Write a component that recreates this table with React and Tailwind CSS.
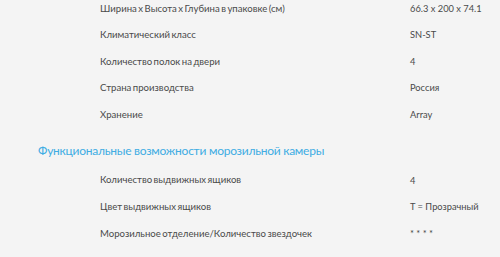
export default function App() {
  const rows1 = [
    ["Ширина x Высота x Глубина в упаковке (см)", "66.3 x 200 x 74.1"],
    ["Климатический класс", "SN-ST"],
    ["Количество полок на двери", "4"],
    ["Страна производства", "Россия"],
    ["Хранение", "Array"],
  ];
  const rows2 = [
    ["Количество выдвижных ящиков", "4"],
    ["Цвет выдвижных ящиков", "T = Прозрачный"],
    ["Морозильное отделение/Количество звездочек", "* * * *"],
  ];
  const Row = ({ l, v }) => (
    <div className="flex h-[26.6px] items-center whitespace-nowrap leading-none text-[#4a4a4a]">
      <div className="w-[410px] shrink-0 pl-[100px] text-[9.6px] [word-spacing:-1px]">{l}</div>
      <div className="text-[9.3px]">{v}</div>
    </div>
  );
  return (
    <div className="h-[257px] w-[500px] overflow-hidden bg-[#f4f4f4] font-['Lato',sans-serif]">
      <div className="-mt-[5px]">
        {rows1.map(([l, v]) => (
          <Row key={l} l={l} v={v} />
        ))}
      </div>
      <div className="mt-[11px] h-[24px] whitespace-nowrap pl-[38px] text-[12px] leading-[24px] tracking-[-0.25px] text-[#40ace3]">
        Функциональные возможности морозильной камеры
      </div>
      <div className="mt-[4px]">
        {rows2.map(([l, v]) => (
          <Row key={l} l={l} v={v} />
        ))}
      </div>
    </div>
  );
}
